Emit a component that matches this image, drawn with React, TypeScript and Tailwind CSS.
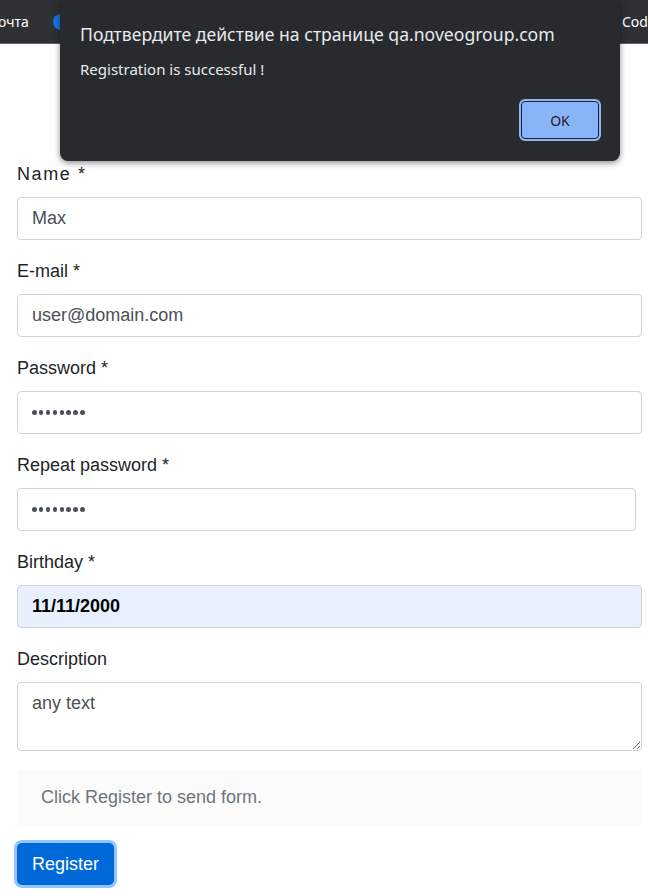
import React from 'react';

const font = { fontFamily: '"Liberation Sans", Arial, sans-serif' };

function Field({
  label,
  children,
  spaced,
}: {
  label: string;
  children: React.ReactNode;
  spaced?: boolean;
}) {
  return (
    <div className="mb-[19px]">
      <label
        className={`block h-6 mb-[11px] text-[18px] leading-6 text-[#212529] ${spaced ? 'tracking-[1.6px]' : ''}`}
      >
        {label}
      </label>
      {children}
    </div>
  );
}

const inputCls =
  'block h-[43px] w-[625px] rounded-[4px] border border-[#ced4da] bg-white px-[14px] text-[18px] text-[#495057] outline-none';

function Dots() {
  return (
    <span className="flex gap-[2.4px]">
      {Array.from({ length: 8 }).map((_, i) => (
        <span key={i} className="h-[4.5px] w-[4.5px] rounded-full bg-[#495057]" />
      ))}
    </span>
  );
}

export default function App() {
  return (
    <div className="relative h-[896px] w-[648px] overflow-hidden bg-white" style={font}>
      {/* bookmark bar */}
      <div
        className="flex h-[44px] items-center overflow-hidden border-b border-[#5f6368] bg-[#2f3033] text-[14px] text-white"
        style={{ fontFamily: '"Noto Sans", sans-serif' }}
      >
        <div className="flex w-[622px] shrink-0 items-center gap-6">
          <span className="-ml-[2px]">очта</span>
          <span className="h-4 w-4 rounded-full bg-[#1a73e8]" />
        </div>
        <span className="shrink-0 whitespace-nowrap">Codeforces</span>
      </div>

      {/* form */}
      <form className="px-[17px] pt-[118px]" onSubmit={(e) => e.preventDefault()}>
        <Field label="Name *" spaced>
          <input className={inputCls} defaultValue="Max" />
        </Field>
        <Field label="E-mail *">
          <input className={inputCls} defaultValue="user@domain.com" />
        </Field>
        <Field label="Password *">
          <div className={`${inputCls} flex items-center`}>
            <Dots />
          </div>
        </Field>
        <Field label="Repeat password *">
          <div className={`${inputCls} !w-[619px] flex items-center`}>
            <Dots />
          </div>
        </Field>
        <Field label="Birthday *">
          <input
            className={`${inputCls} !bg-[#e8f0fe] font-bold !text-black`}
            defaultValue="11/11/2000"
          />
        </Field>
        <Field label="Description">
          <textarea
            className="block h-[69px] w-[625px] resize-y rounded-[4px] border border-[#ced4da] px-[14px] pt-[8px] text-[18px] leading-6 text-[#495057] outline-none"
            defaultValue="any text"
          />
        </Field>
        <div className="flex h-[55px] w-[625px] items-center bg-[#fbfbfb] pl-[24px] text-[18px] text-[#6c757d]">
          Click Register to send form.
        </div>
        <button
          type="submit"
          className="mt-[18px] h-[42px] rounded-[5px] bg-[#0069d9] px-[15px] text-[18px] text-white ring-[3px] ring-[#93c5fd]"
        >
          Register
        </button>
      </form>

      {/* confirm dialog */}
      <div
        className="absolute left-[60px] top-0 h-[161px] w-[560px] rounded-b-[8px] bg-[#292a2d] shadow-[0_2px_6px_rgba(0,0,0,0.45)]"
        style={{ fontFamily: '"Noto Sans", "Open Sans", sans-serif' }}
      >
        <div className="pl-[20px] pt-[21px] text-[17.6px] leading-[26px] text-[#e8eaed]">
          Подтвердите действие на странице qa.noveogroup.com
        </div>
        <div className="pl-[20px] pt-[12px] text-[15px] leading-5 text-[#e8eaed]">
          Registration is successful !
        </div>
        <div className="flex justify-end pr-[21px] pt-[22px]">
          <button className="h-[38px] w-[78px] rounded-[4px] border border-[#202124] bg-[#8ab4f8] text-[14px] text-[#202124] ring-2 ring-[#8ab4f8]">
            OK
          </button>
        </div>
      </div>
    </div>
  );
}
